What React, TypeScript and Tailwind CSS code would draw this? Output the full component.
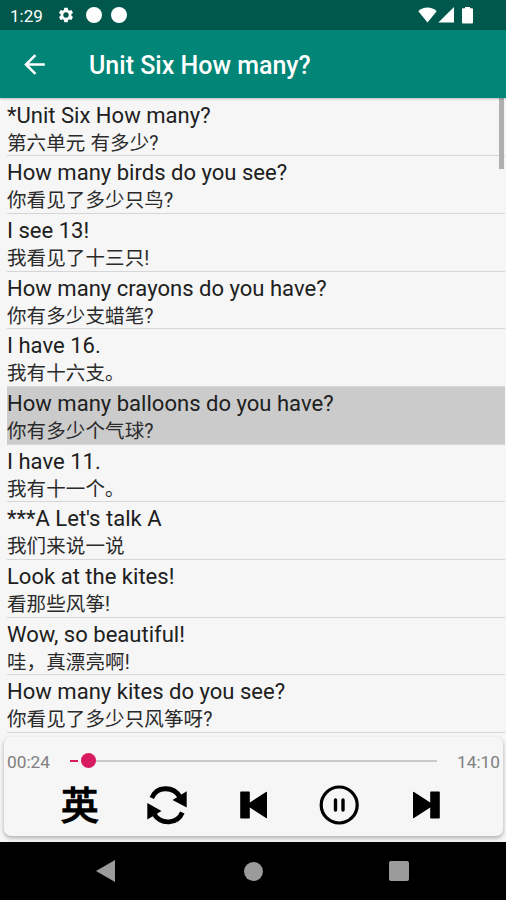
import React from 'react';

interface Sentence {
  en: string;
  zh: string;
}

const sentences: Sentence[] = [
  { en: '*Unit Six How many?', zh: '第六单元 有多少?' },
  { en: 'How many birds do you see?', zh: '你看见了多少只鸟?' },
  { en: 'I see 13!', zh: '我看见了十三只!' },
  { en: 'How many crayons do you have?', zh: '你有多少支蜡笔?' },
  { en: 'I have 16.', zh: '我有十六支。' },
  { en: 'How many balloons do you have?', zh: '你有多少个气球?' },
  { en: 'I have 11.', zh: '我有十一个。' },
  { en: "***A Let's talk A", zh: '我们来说一说' },
  { en: 'Look at the kites!', zh: '看那些风筝!' },
  { en: 'Wow, so beautiful!', zh: '哇，真漂亮啊!' },
  { en: 'How many kites do you see?', zh: '你看见了多少只风筝呀?' },
];

const activeIndex = 5;

function StatusBar() {
  return (
    <div className="flex h-[30px] items-center bg-[#00574b] pl-[10px] pr-[33px] text-white">
      <span className="w-[47px] pt-[2px] text-[17px] leading-[30px]">1:29</span>
      <svg className="h-[18px] w-[18px]" viewBox="0 0 24 24" fill="currentColor">
        <path
          fillRule="evenodd"
          d="M19.14 12.94c.04-.3.06-.61.06-.94 0-.32-.02-.64-.07-.94l2.03-1.58a.49.49 0 0 0 .12-.61l-1.92-3.32a.49.49 0 0 0-.59-.22l-2.39.96c-.5-.38-1.03-.7-1.62-.94l-.36-2.54a.48.48 0 0 0-.48-.41h-3.84c-.24 0-.43.17-.47.41l-.36 2.54c-.59.24-1.13.57-1.62.94l-2.39-.96a.49.49 0 0 0-.59.22L2.74 8.87a.48.48 0 0 0 .12.61l2.03 1.58c-.05.3-.09.63-.09.94s.02.64.07.94l-2.03 1.58a.49.49 0 0 0-.12.61l1.92 3.32c.12.22.37.29.59.22l2.39-.96c.5.38 1.03.7 1.62.94l.36 2.54c.05.24.24.41.48.41h3.84c.24 0 .44-.17.47-.41l.36-2.54c.59-.24 1.13-.56 1.62-.94l2.39.96c.22.08.47 0 .59-.22l1.92-3.32a.48.48 0 0 0-.12-.61l-2.01-1.58zM12 15.6A3.6 3.6 0 1 1 12 8.4a3.6 3.6 0 0 1 0 7.2z"
        />
      </svg>
      <span className="ml-[11px] h-[16px] w-[16px] rounded-full bg-white" />
      <span className="ml-[9px] h-[16px] w-[16px] rounded-full bg-white" />
      <svg className="ml-auto h-[16px] w-[19px]" viewBox="0 0 19 16" fill="currentColor">
        <path d="M.3 4.2C2.8 1.8 6 .6 9.5.6s6.7 1.2 9.2 3.6L9.5 15.4z" />
      </svg>
      <svg className="ml-[1px] h-[16px] w-[16px]" viewBox="0 0 16 16" fill="currentColor">
        <path d="M16 0v15.400H.4z" />
      </svg>
      <svg className="ml-[8px] h-[17px] w-[11px]" viewBox="0 0 11 17" fill="currentColor">
        <path d="M3 0h5v1.300h2q1 0 1 1V15.500q0 1-1 1H1q-1 0-1-1V2.300q0-1 1-1h2z" />
      </svg>
    </div>
  );
}

function Toolbar() {
  return (
    <div className="relative z-10 flex h-[68px] items-center bg-[#008577] pl-[19px] text-white shadow-[0_1px_2px_rgba(0,0,0,0.25)]">
      <svg className="h-[31px] w-[31px]" viewBox="0 0 24 24" fill="currentColor">
        <path d="M20 11H7.830l5.590-5.590L12 4l-8 8 8 8 1.410-1.410L7.830 13H20v-2z" />
      </svg>
      <h1 className="ml-[39px] pt-[3px] text-[25px] font-medium">Unit Six How many?</h1>
    </div>
  );
}

function SentenceList() {
  return (
    <div className="relative h-[635px] shrink-0 pl-[7px] pr-px pt-[0.500px]">
      {sentences.map((s, i) => (
        <div
          key={i}
          className={`flex h-[57.680px] flex-col border-b border-[#d6d6d6] text-[#202020] ${i === activeIndex ? 'bg-[#cbcbcb]' : ''}`}
        >
          <p className="h-[30px] pt-[2px] text-[22.050px] leading-[30px]">{s.en}</p>
          <p className="h-[26px] pt-px text-[19.500px] leading-[28px] tracking-[0.120px] text-[#2a2a2a]">{s.zh}</p>
        </div>
      ))}
      <div className="absolute right-[2px] top-0 h-[71px] w-[5px] bg-[#b0b0b0]" />
    </div>
  );
}

function Player() {
  return (
    <div className="flex h-[109px] flex-col px-[3px] pt-[4px]">
      <div className="ml-px flex h-[99px] flex-col rounded-[7px] bg-[#f6f6f6] pl-[3px] pr-[3px] shadow-[0_2px_4px_rgba(0,0,0,0.3)]">
        <div className="flex h-[47px] items-center text-[17.300px] text-[#808080]">
          <span className="w-[63px] pt-[4px]">00:24</span>
          <div className="flex w-[367px] items-center">
            <span className="h-[2px] w-[8px] bg-[#d81b60]" />
            <span className="ml-[3px] h-[15px] w-[15px] rounded-full bg-[#d81b60]" />
            <span className="h-[2px] flex-1 bg-[#c9c9c9]" />
          </div>
          <span className="ml-auto pt-[4px]">14:10</span>
        </div>
        <div className="flex h-[42px] items-center text-black">
          <span className="ml-[54px] w-[40px] pt-[2px] text-[37.500px] font-normal leading-[40px] [-webkit-text-stroke:1.500px_black]">英</span>
          <svg className="ml-[46px] h-[40px] w-[40px]" viewBox="0 0 40 40">
            <path d="M4.800 13C9.500 1.200 26 .5 33 12" fill="none" stroke="currentColor" strokeWidth="4.800" />
            <path d="M39.700 6.300v16.200L25.500 15z" />
            <path d="M35.300 27.500C30.500 39.300 14 40 7 29" fill="none" stroke="currentColor" strokeWidth="4.800" />
            <path d="M.3 34.500V18L14.500 26z" />
          </svg>
          <svg className="ml-[53px] h-[28px] w-[28px]" viewBox="0 0 28 28" fill="currentColor">
            <path d="M1 .5h8q.8 0 .8.800v10.200L26 1q1-.6 1 .6v24.800q0 1.200-1 .6L9.800 16.500v10.200q0 .8-.8.800H1q-.8 0-.8-.8V1.300Q.2.500 1 .5z" />
          </svg>
          <svg className="ml-[51px] h-[40px] w-[40px]" viewBox="0 0 40 40" fill="none" stroke="currentColor">
            <circle cx="20.200" cy="20" r="18" strokeWidth="3.200" />
            <path d="M16.500 15v10M24 15v10" strokeWidth="3.400" strokeLinecap="round" />
          </svg>
          <svg className="ml-[53px] h-[28px] w-[28px]" viewBox="0 0 28 28" fill="currentColor">
            <path d="M27 .5h-8q-.8 0-.8.800v10.200L2 1Q1 .4 1 1.600v24.800q0 1.200 1 .6l16.200-10.500v10.200q0 .8.8.800h8q.8 0 .8-.8V1.300q0-.8-.8-.8z" />
          </svg>
        </div>
      </div>
    </div>
  );
}

function NavigationBar() {
  return (
    <div className="flex h-[58px] items-center bg-black">
      <svg className="ml-[96px] h-[22px] w-[19px]" viewBox="0 0 19 22" fill="#9b9b9b">
        <path d="M19 0v22L0 11z" />
      </svg>
      <span className="ml-[129px] h-[19px] w-[19px] rounded-full bg-[#9b9b9b]" />
      <span className="ml-[126px] h-[20px] w-[20px] rounded-[2px] bg-[#9b9b9b]" />
    </div>
  );
}

export default function App() {
  return (
    <div className="flex h-[900px] w-[506px] flex-col overflow-hidden bg-[#f6f6f6] font-['Roboto','Noto_Sans_CJK_SC',sans-serif]">
      <StatusBar />
      <Toolbar />
      <SentenceList />
      <Player />
      <NavigationBar />
    </div>
  );
}
